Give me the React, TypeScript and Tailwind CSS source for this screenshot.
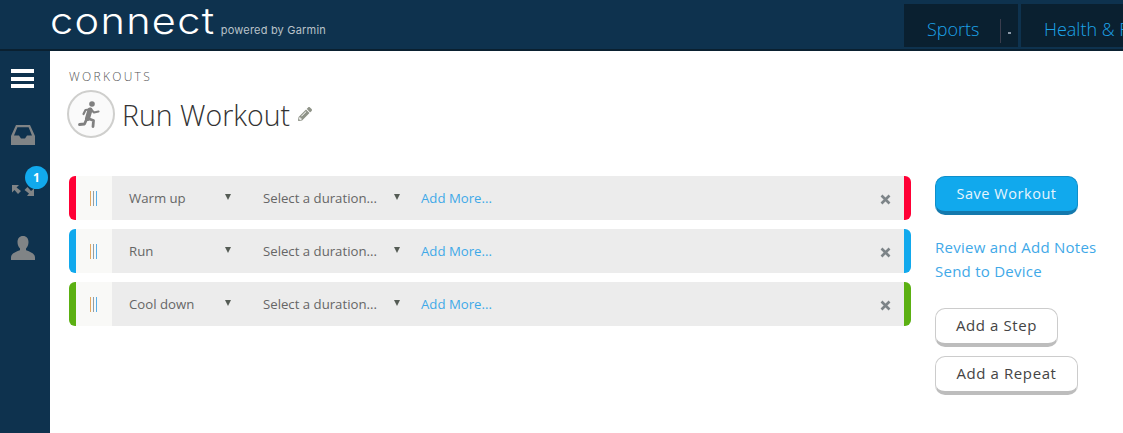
import { FaPencilAlt } from "react-icons/fa";

const font = "font-['Open_Sans',sans-serif]";

const steps = [
  { name: "Warm up", bar: "bg-[#ff0035]" },
  { name: "Run", bar: "bg-[#11a9ed]" },
  { name: "Cool down", bar: "bg-[#5bb012]" },
];

function Caret() {
  return <span className="h-0 w-0 border-x-[3.5px] border-t-[6px] border-x-transparent border-t-[#555c55]" />;
}

function StepRow({ name, bar }: { name: string; bar: string }) {
  return (
    <div className="flex h-11 w-[842px]">
      <div className={`w-[7px] rounded-l-[6px] ${bar}`} />
      <div className="flex w-9 items-center justify-center bg-[#f9f9f7]">
        <span className="mr-[1px] flex gap-[2px]">
          <i className="h-[15px] w-[1px] bg-[#e5a860]" />
          <i className="h-[15px] w-[1px] bg-[#8f9fa8]" />
          <i className="h-[15px] w-[1px] bg-[#5aaee8]" />
        </span>
      </div>
      <div className="flex flex-1 items-center bg-[#ececec] pt-[2px] text-[13.200px] text-[#666]">
        <div className="flex w-[136px] items-center justify-between px-[17px]">
          <span>{name}</span>
          <span className="-mt-[3px] flex"><Caret /></span>
        </div>
        <div className="flex w-[152px] items-center justify-between pl-[15px]">
          <span>Select a duration...</span>
          <span className="-mt-[3px] flex"><Caret /></span>
        </div>
        <a className="ml-[21px] text-[#3fa9e8]">Add More...</a>
        <svg className="ml-auto mr-[13px]" width="11" height="11" viewBox="0 0 11 11">
          <path d="M1.5 1.5l8 8M9.5 1.5l-8 8" stroke="#7d8488" strokeWidth="2.6" />
        </svg>
      </div>
      <div className={`w-[7px] rounded-r-[6px] ${bar}`} />
    </div>
  );
}

function RunnerIcon() {
  return (
    <svg width="28" height="28" viewBox="0 0 28 28" fill="none" stroke="#808080" strokeLinecap="round" strokeLinejoin="round">
      <circle cx="15" cy="4" r="2.8" fill="#808080" stroke="none" />
      <path d="M13 10 10.500 18.500" strokeWidth="5" />
      <path d="M13.500 9 17 12.500 21.500 11.500M12 9.500 8.500 10 6.500 14" strokeWidth="2.200" />
      <path d="M11 18.500 16.500 20.500 16 26.500M9.500 19.500 7.500 24 2.500 24.500" strokeWidth="2.800" />
    </svg>
  );
}

function SideIcons() {
  return (
    <aside className="flex w-[50px] shrink-0 flex-col items-start bg-[#0e324e] pl-[11px] pt-[18px]">
      <div className="flex w-[23px] flex-col gap-[3.5px]">
        <i className="h-1 bg-white" />
        <i className="h-1 bg-white" />
        <i className="h-1 bg-white" />
      </div>
      <svg className="mt-[37px]" width="24" height="20" viewBox="0 0 24 20">
        <path fillRule="evenodd" fill="#808486" d="M5 0h14l5 11v9H0v-9zM6.400 2.200 3 10.600h5l2 3h4l2-3h5L17.600 2.200z" />
      </svg>
      <div className="relative mt-[38px] h-[16px] w-[24px]">
        <svg width="24" height="16" viewBox="0 0 24 16">
          <path fill="#808486" d="M1 2h7L5.500 4.500 10 8 7 11 3.500 7 1 9.500zM23 13h-7l2-2.500L13.500 7l3-3L20 8l3-2.500z" />
        </svg>
        <span className="absolute -top-[17px] left-[14px] flex h-[23px] w-[23px] items-center justify-center rounded-full bg-[#11a9ed] text-[12px] font-bold text-white">1</span>
      </div>
      <svg className="mt-[37px]" width="24" height="24" viewBox="0 0 24 24">
        <path fill="#808486" d="M12 0c3.600 0 5.500 2.600 5.500 6 0 2.600-1 5-2.500 6.400v1.600c1 1.300 9 2.200 9 7.500V24H0v-2.500c0-5.300 8-6.200 9-7.500v-1.600C7.500 11 6.500 8.600 6.500 6c0-3.400 1.900-6 5.500-6z" />
      </svg>
    </aside>
  );
}

export default function App() {
  return (
    <div className={`flex h-[433px] w-[1123px] flex-col overflow-hidden bg-white ${font}`}>
      <header className="flex h-[51px] shrink-0 border-b-2 border-[#0a2030] bg-[#0e324e]">
        <div className="ml-[50px] flex items-baseline pt-[3px]">
          <span className="inline-block origin-left scale-x-[1.12] font-['Inter',sans-serif] text-[37px] font-light leading-[36px] tracking-[1.200px] text-white">connect</span>
          <span className="ml-[23px] font-['Inter',sans-serif] text-[11px] leading-[14px] tracking-[0.2px] text-[#b9c2c9]">powered by Garmin</span>
        </div>
        <nav className="ml-auto flex gap-[3px] pt-1">
          <div className="flex h-[43px] w-[114px] bg-[#0a2030] pl-[23px] pt-[10px] text-[18px] font-light leading-[30px] text-[#1da4ea]">
            <span>Sports</span>
            <i className="ml-[20px] mt-[5px] h-[24px] w-[1px] bg-[#3a3d4d]" />
            <span className="ml-[7px] mt-[18px] h-[2px] w-[3px] bg-[#8a99a8]" />
          </div>
          <div className="h-[43px] w-[102px] overflow-hidden whitespace-nowrap bg-[#0a2030] pl-[23px] pt-[10px] text-[18px] font-light leading-[30px] text-[#1da4ea]">
            Health &amp; Fitness
          </div>
        </nav>
      </header>
      <div className="flex min-h-0 flex-1">
        <SideIcons />
        <main className="flex-1 pl-[19px]">
          <p className="pt-[19px] text-[12px] font-light leading-[14px] tracking-[2.300px] text-[#555]">WORKOUTS</p>
          <div className="mt-[6px] flex h-[48px] items-center">
            <div className="-ml-[2px] flex h-[48px] w-[48px] items-center justify-center rounded-full border-2 border-[#cfcfcd] bg-[#fafafa]">
              <RunnerIcon />
            </div>
            <h1 className="ml-[7px] pt-[2px] text-[28.500px] font-light leading-[36px] text-[#333]">Run Workout</h1>
            <FaPencilAlt className="ml-[8px] text-[14px] text-[#8f9388]" />
          </div>
          <div className="mt-[38px] flex">
            <div className="flex flex-col gap-[9px]">
              {steps.map((s) => (
                <StepRow key={s.name} name={s.name} bar={s.bar} />
              ))}
            </div>
            <div className="ml-6 flex flex-col items-start">
              <button className="h-[39px] w-[143px] rounded-[10px] border border-[#0f8fca] border-b-[4px] border-b-[#1479ad] bg-[#11a9ed] text-[14.500px] tracking-[0.55px] text-[#e6f5fd]">
                Save Workout
              </button>
              <a className="mt-[22px] text-[15px] leading-[20px] tracking-[0.25px] text-[#3fa9e8]">Review and Add Notes</a>
              <a className="mt-[4px] text-[15px] leading-[20px] tracking-[0.25px] text-[#3fa9e8]">Send to Device</a>
              <button className="mt-[27px] h-[39px] w-[123px] rounded-[10px] border border-[#cccccc] border-b-[4px] border-b-[#bdbdbd] bg-white pb-[2px] text-[15px] tracking-[0.6px] text-[#444]">
                Add a Step
              </button>
              <button className="mt-[9px] h-[39px] w-[143px] rounded-[10px] border border-[#cccccc] border-b-[4px] border-b-[#bdbdbd] bg-white pb-[2px] text-[15px] tracking-[0.6px] text-[#444]">
                Add a Repeat
              </button>
            </div>
          </div>
        </main>
      </div>
    </div>
  );
}
